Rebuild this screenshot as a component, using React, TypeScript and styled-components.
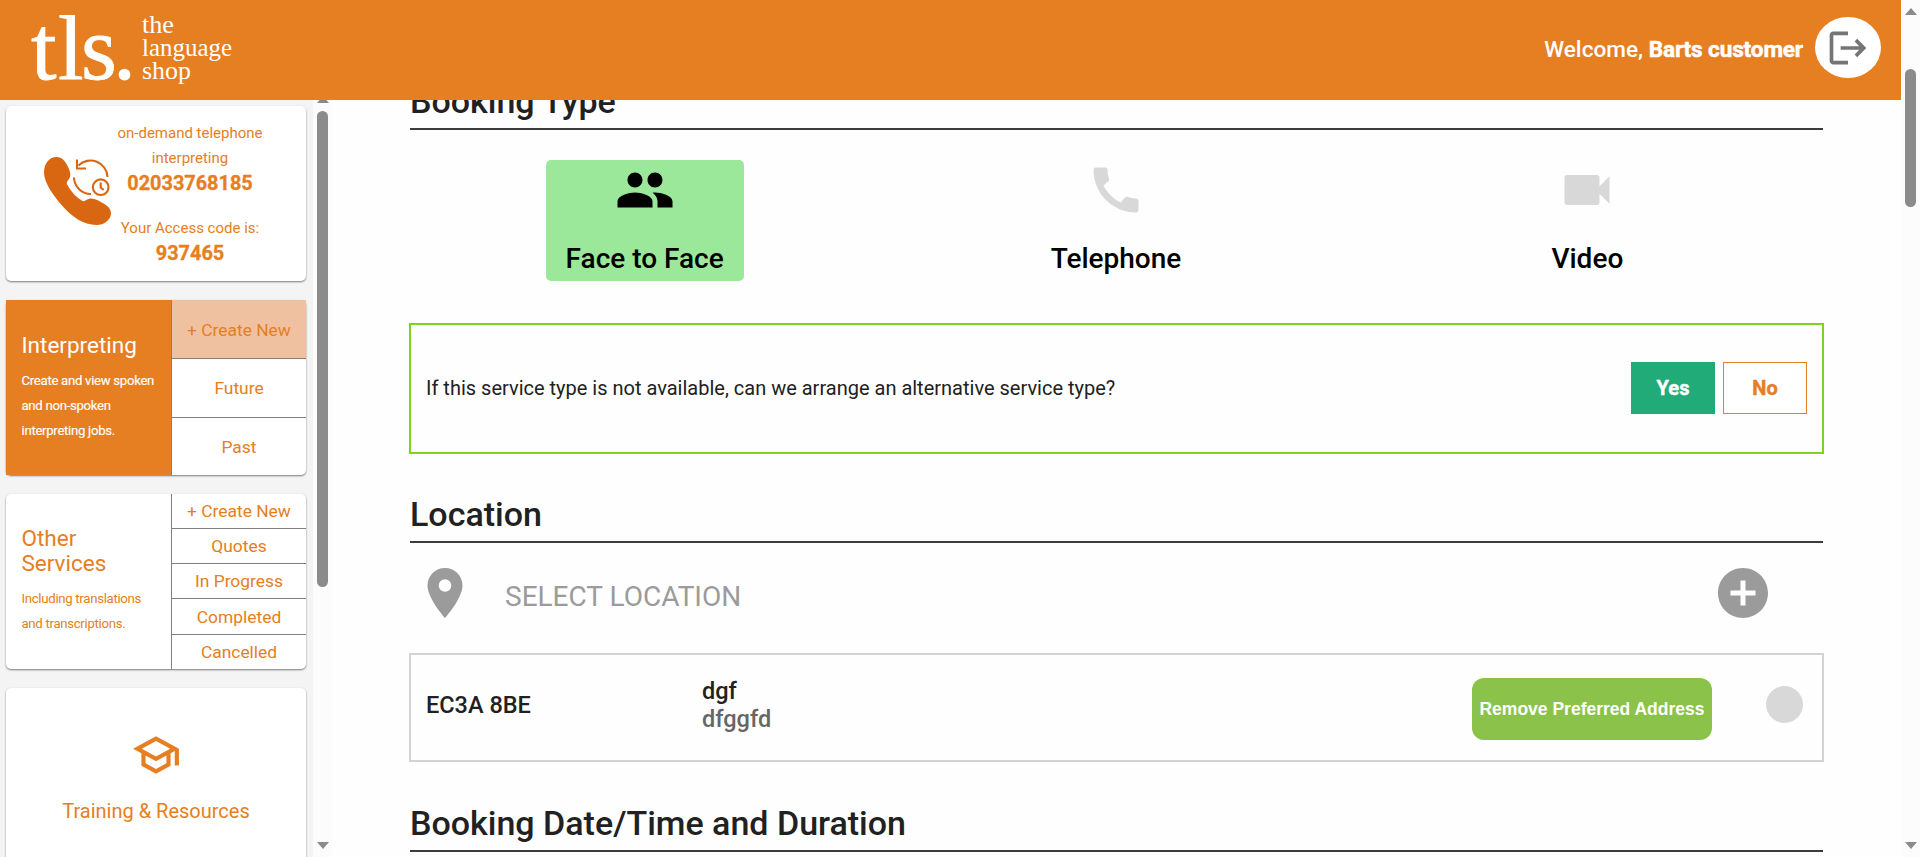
import React from "react";
import styled, { createGlobalStyle } from "styled-components";
import {
  MdAddCircle,
  MdCall,
  MdLocationOn,
  MdLogout,
  MdOutlineSchool,
  MdPeople,
  MdVideocam,
} from "react-icons/md";

const orange = "#e67e22";

const GlobalStyle = createGlobalStyle`
  * { box-sizing: border-box; }
  body {
    margin: 0;
    overflow: hidden;
    font-family: Roboto, "Liberation Sans", sans-serif;
    color: #212121;
    background: #fefefe;
  }
  svg { display: block; flex: none; }
  button { font-family: inherit; padding: 0; cursor: pointer; }
`;

const Screen = styled.div`
  display: flex;
  height: 857px;
  overflow: hidden;
`;

const Portal = styled.div`
  display: flex;
  flex-direction: column;
  flex: 1;
  min-width: 0;
`;

const TopBar = styled.header`
  display: flex;
  flex: none;
  justify-content: space-between;
  height: 100px;
  padding-right: 20px;
  background: ${orange};
  color: #fff;
`;

const Account = styled.div`
  display: flex;
  align-items: flex-start;
  padding-top: 17px;
`;

const Welcome = styled.div`
  margin-right: 12px;
  line-height: 65px;
  font-size: 22.6px;
  font-weight: 500;
  white-space: nowrap;
`;

const UserName = styled.b`
  font-weight: 700;
  letter-spacing: -0.15px;
  -webkit-text-stroke: 0.5px #fff;
`;

const LogoutButton = styled.button`
  display: flex;
  align-items: center;
  justify-content: center;
  width: 66px;
  height: 61px;
  border: 0;
  border-radius: 50%;
  background: #fff;
  color: #757575;
`;

const Body = styled.div`
  display: flex;
  flex: 1;
  min-height: 0;
`;

const Sidebar = styled.nav`
  display: flex;
  flex-direction: column;
  flex: none;
  gap: 19px;
  width: 313px;
  padding: 6px 7px 0 6px;
  overflow: hidden;
  background: #f4f4f4;
`;

const Card = styled.section`
  display: flex;
  flex: none;
  height: 175px;
  border-radius: 5px;
  background: #fff;
  color: ${orange};
  box-shadow: 0 1px 2px rgba(0, 0, 0, 0.5);
`;

const PhoneDetails = styled.div`
  flex: 1;
  padding-top: 15px;
  padding-right: 42px;
  text-align: center;
`;

const PhoneLine = styled.div<{ $gap?: number }>`
  margin-top: ${(p) => p.$gap ?? 0}px;
  line-height: 25px;
  font-size: 15px;
  white-space: nowrap;
`;

const PhoneValue = styled.div`
  line-height: 26px;
  margin-bottom: -1px;
  font-size: 19.9px;
  font-weight: 700;
  -webkit-text-stroke: 0.3px ${orange};
`;

const ServiceInfo = styled.div<{ $active?: boolean }>`
  width: 165px;
  flex: none;
  padding: ${(p) => (p.$active ? 33 : 32)}px 0 0 15.5px;
  background: ${(p) => (p.$active ? orange : "transparent")};
  color: ${(p) => (p.$active ? "#fff" : orange)};
`;

const ServiceTitle = styled.h2`
  margin: 0 0 10px;
  line-height: 25px;
  font-size: 22.5px;
  font-weight: 400;
`;

const ServiceNote = styled.p<{ $strong?: boolean }>`
  margin: 0;
  line-height: 25px;
  font-size: 13.2px;
  letter-spacing: -0.3px;
  -webkit-text-stroke: ${(p) => (p.$strong ? "0.15px" : "0")} currentColor;
`;

const ServiceLinks = styled.div<{ $rows: string }>`
  display: grid;
  grid-template-rows: ${(p) => p.$rows};
  flex: 1;
  border-left: 1px solid #808080;
`;

const ServiceLink = styled.a<{ $selected?: boolean }>`
  display: flex;
  align-items: center;
  justify-content: center;
  font-size: 17.4px;
  background: ${(p) => (p.$selected ? "#f0c1a0" : "transparent")};
  padding-top: ${(p) => (p.$selected ? 2 : 0)}px;
  & + & { border-top: 1px solid #808080; }
`;

const TrainingCard = styled(Card)`
  flex-direction: column;
  align-items: center;
  padding-top: 42px;
  font-size: 20px;
`;

const TrainingLabel = styled.div`
  margin-top: 19px;
  line-height: 24px;
`;

const ScrollTrack = styled.div`
  display: flex;
  flex-direction: column;
  align-items: center;
  flex: none;
  width: 19px;
  padding-bottom: 8px;
  background: #fcfcfc;
`;

const Thumb = styled.div<{ $top: number; $height: number }>`
  width: 11px;
  height: ${(p) => p.$height}px;
  margin-top: ${(p) => p.$top}px;
  margin-bottom: auto;
  border-radius: 6px;
  background: #8b8b8b;
`;

const Arrow = styled.i<{ $down?: boolean; $top?: number }>`
  margin-top: ${(p) => p.$top ?? 0}px;
  border: 0 solid transparent;
  border-width: ${(p) => (p.$down ? "7px 6.5px 0" : "0 6.5px 7px")};
  border-top-color: ${(p) => (p.$down ? "#8b8b8b" : "transparent")};
  border-bottom-color: ${(p) => (p.$down ? "transparent" : "#8b8b8b")};
`;

const ArrowWindow = styled.div`
  display: flex;
  align-items: flex-end;
  height: 3px;
  overflow: hidden;
`;

const Main = styled.main`
  flex: 1;
  min-width: 0;
  padding: 0 78px;
  overflow: hidden;
`;

const Form = styled.div`
  margin-top: -18px;
`;

const Heading = styled.h1`
  height: 48px;
  margin: 0;
  border-bottom: 2px solid #3c3c3c;
  line-height: 38px;
  font-size: 34px;
  font-weight: 500;
  white-space: nowrap;
`;

const TypeOptions = styled.div`
  display: grid;
  grid-template-columns: repeat(3, 1fr);
  justify-items: center;
  margin: 30px 0 42px -1px;
`;

const TypeOption = styled.button<{ $selected?: boolean }>`
  display: flex;
  flex-direction: column;
  align-items: center;
  width: 198px;
  height: 121px;
  border: 0;
  border-radius: 5px;
  background: ${(p) => (p.$selected ? "#9be89b" : "transparent")};
  color: ${(p) => (p.$selected ? "#000" : "#d8d8d8")};
`;

const TypeLabel = styled.span`
  margin-top: 23px;
  line-height: 32px;
  font-size: 28px;
  font-weight: 500;
  color: #000;
`;

const AlternativeBox = styled.div`
  display: flex;
  align-items: center;
  gap: 8px;
  height: 131px;
  margin: 0 -1px 41px;
  padding: 0 15px 1px;
  border: 2px solid #7ed321;
`;

const Question = styled.div`
  flex: 1;
  font-size: 20px;
`;

const Choice = styled.button<{ $chosen?: boolean }>`
  width: 84px;
  height: 52px;
  border: 1px solid ${(p) => (p.$chosen ? "#21ab79" : orange)};
  background: ${(p) => (p.$chosen ? "#21ab79" : "#fff")};
  color: ${(p) => (p.$chosen ? "#fff" : orange)};
  font-size: 20px;
  font-weight: 700;
  -webkit-text-stroke: 0.4px currentColor;
`;

const LocationBar = styled.div`
  display: flex;
  align-items: center;
  height: 60px;
  margin: 20px 0 30px;
  padding: 0 50px 0 5px;
  color: #9b9b9b;
`;

const LocationPrompt = styled.div`
  flex: 1;
  margin-left: 30px;
  padding-top: 6px;
  font-size: 28px;
`;

const AddressRow = styled.div`
  display: flex;
  align-items: center;
  height: 109px;
  margin: 0 -1px 42px;
  padding: 0 19px 6px 15px;
  border: 2px solid #d3d3d3;
  font-size: 23.5px;
  font-weight: 500;
`;

const Postcode = styled.div`
  width: 276px;
`;

const AddressLines = styled.div`
  flex: 1;
  line-height: 28px;
`;

const AddressDetail = styled.div`
  color: #666;
`;

const RemoveButton = styled.button`
  width: 240px;
  height: 62px;
  margin: 9px 54px 0 0;
  border: 0;
  border-radius: 12px;
  background: #8bc34a;
  color: #fff;
  font-family: "Liberation Sans", Arial, sans-serif;
  font-size: 17.5px;
  font-weight: 700;
  white-space: nowrap;
`;

const RadioDot = styled.div`
  width: 37px;
  height: 37px;
  border-radius: 50%;
  background: #d8d8d8;
`;

const Logo = () => (
  <svg width="260" height="100" fill="#fff" fontFamily="'Liberation Serif', serif">
    <text x="31 58 81 113" y="79" fontSize="92" stroke="#fff" strokeWidth="0.8">tls.</text>
    <g fontSize="25">
      <text x="142" y="33" textLength="32" lengthAdjust="spacingAndGlyphs">the</text>
      <text x="142" y="55.5" textLength="90" lengthAdjust="spacingAndGlyphs">language</text>
      <text x="142" y="78.5" textLength="49" lengthAdjust="spacingAndGlyphs">shop</text>
    </g>
  </svg>
);

const CallbackIcon = () => (
  <svg width="110" height="175" fill="none" stroke="#d96610" strokeWidth="2.1">
    <path
      fill="#d96610"
      stroke="none"
      d="M38 66.500C38 57 43.500 51 50.500 51c5.500 0 8.500 3.500 12 11 3 6 2 10-.7 12.500-1.300 1.500-1.300 3-.3 4.500 3 6 8.500 12 14.200 15.500 1.500 1 3 .8 4.500-.4 3.500-2.600 8-1.800 13 .9 7.300 3.800 11.800 7 11.800 12.300 0 7.200-7.500 11.700-14.500 11.700-13 0-25-8.500-34.500-19.500C46 88 38 76 38 66.500z"
    />
    <path d="M101.500 71a17 17 0 0 0-29-11.500M71 53.500v9h9" />
    <path d="M68 71.500a17 17 0 0 0 17 16.500" />
    <circle cx="94.700" cy="81.200" r="7.800" />
    <path d="M94.700 76.500v5l3 2.500" />
  </svg>
);

const interpretingLinks = ["+ Create New", "Future", "Past"];
const otherLinks = ["+ Create New", "Quotes", "In Progress", "Completed", "Cancelled"];

export default function App() {
  return (
    <Screen>
      <GlobalStyle />
      <Portal>
        <TopBar>
          <Logo />
          <Account>
            <Welcome>
              Welcome, <UserName>Barts customer</UserName>
            </Welcome>
            <LogoutButton aria-label="Log out">
              <MdLogout size={44} />
            </LogoutButton>
          </Account>
        </TopBar>
        <Body>
          <Sidebar>
            <Card>
              <CallbackIcon />
              <PhoneDetails>
                <PhoneLine>on-demand telephone</PhoneLine>
                <PhoneLine>interpreting</PhoneLine>
                <PhoneValue>02033768185</PhoneValue>
                <PhoneLine $gap={20}>Your Access code is:</PhoneLine>
                <PhoneValue>937465</PhoneValue>
              </PhoneDetails>
            </Card>
            <Card>
              <ServiceInfo $active>
                <ServiceTitle>Interpreting</ServiceTitle>
                <ServiceNote $strong>
                  Create and view spoken
                  <br />
                  and non-spoken
                  <br />
                  interpreting jobs.
                </ServiceNote>
              </ServiceInfo>
              <ServiceLinks $rows="58px 59px 58px">
                {interpretingLinks.map((label, i) => (
                  <ServiceLink key={label} $selected={i === 0}>
                    {label}
                  </ServiceLink>
                ))}
              </ServiceLinks>
            </Card>
            <Card>
              <ServiceInfo>
                <ServiceTitle>
                  Other
                  <br />
                  Services
                </ServiceTitle>
                <ServiceNote>
                  Including translations
                  <br />
                  and transcriptions.
                </ServiceNote>
              </ServiceInfo>
              <ServiceLinks $rows="34px 35px 35px 36px 35px">
                {otherLinks.map((label) => (
                  <ServiceLink key={label}>{label}</ServiceLink>
                ))}
              </ServiceLinks>
            </Card>
            <TrainingCard>
              <MdOutlineSchool size={50} />
              <TrainingLabel>Training &amp; Resources</TrainingLabel>
            </TrainingCard>
          </Sidebar>
          <ScrollTrack>
            <ArrowWindow>
              <Arrow />
            </ArrowWindow>
            <Thumb $top={8} $height={476} />
            <Arrow $down />
          </ScrollTrack>
          <Main>
            <Form>
              <Heading>Booking Type</Heading>
              <TypeOptions>
                <TypeOption $selected>
                  <MdPeople size={60} />
                  <TypeLabel>Face to Face</TypeLabel>
                </TypeOption>
                <TypeOption>
                  <MdCall size={60} />
                  <TypeLabel>Telephone</TypeLabel>
                </TypeOption>
                <TypeOption>
                  <MdVideocam size={60} />
                  <TypeLabel>Video</TypeLabel>
                </TypeOption>
              </TypeOptions>
              <AlternativeBox>
                <Question>
                  If this service type is not available, can we arrange an alternative service type?
                </Question>
                <Choice $chosen>Yes</Choice>
                <Choice>No</Choice>
              </AlternativeBox>
              <Heading>Location</Heading>
              <LocationBar>
                <MdLocationOn size={60} />
                <LocationPrompt>SELECT LOCATION</LocationPrompt>
                <MdAddCircle size={60} />
              </LocationBar>
              <AddressRow>
                <Postcode>EC3A 8BE</Postcode>
                <AddressLines>
                  <div>dgf</div>
                  <AddressDetail>dfggfd</AddressDetail>
                </AddressLines>
                <RemoveButton>Remove Preferred Address</RemoveButton>
                <RadioDot />
              </AddressRow>
              <Heading>Booking Date/Time and Duration</Heading>
            </Form>
          </Main>
        </Body>
      </Portal>
      <ScrollTrack>
        <Arrow $top={8} />
        <Thumb $top={54} $height={138} />
        <Arrow $down />
      </ScrollTrack>
    </Screen>
  );
}
